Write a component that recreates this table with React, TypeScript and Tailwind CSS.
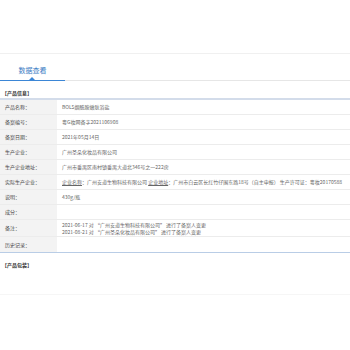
const rows: { label: string; value: React.ReactNode; tall?: boolean }[] = [
  { label: "产品名称：", value: "BOLS烟酰胺嫩肤浴盐" },
  { label: "备案编号：", value: "粤G妆网备字2021106908" },
  { label: "备案日期：", value: "2021年05月14日" },
  { label: "生产企业：", value: "广州圣朵化妆品有限公司" },
  { label: "生产企业地址：", value: "广州市番禺区南村镇番禺大道北346号之一222房" },
  {
    label: "实际生产企业：",
    value: (
      <span className="whitespace-nowrap">
        <span className="underline">企业名称</span>：广州安道生物科技有限公司{" "}
        <span className="underline">企业地址</span>：广州市白云区长红竹仔围东路18号（自主申报） 生产许可证：粤妆20170588
      </span>
    ),
  },
  { label: "说明：", value: "430g/瓶" },
  { label: "成分：", value: "" },
  {
    label: "备注：",
    tall: true,
    value: (
      <div className="leading-[7px]">
        <div>2021-06-17 对 “广州安道生物科技有限公司” 进行了备案人变更</div>
        <div>2021-08-21 对 “广州圣朵化妆品有限公司” 进行了备案人变更</div>
      </div>
    ),
  },
  { label: "历史记录：", value: "" },
]

export default function App() {
  return (
    <div
      className="w-[350px] h-[350px] bg-white overflow-hidden text-[#555]"
      style={{ fontFamily: '"Noto Sans CJK SC", "Liberation Sans", sans-serif' }}
    >
      <div className="h-[53px]" />
      <div className="border-t border-[#f0f0f0] h-[28px] border-b border-b-[#e6e6e6] relative">
        <div className="w-[65px] h-full flex items-end justify-center pb-[5px] text-[7px] text-[#3b7dc4] border-b border-[#3b86d6] relative top-px">
          数据查看
          <span className="absolute bottom-0 left-[29px] w-0 h-0 border-l-[3px] border-r-[3px] border-b-[3px] border-l-transparent border-r-transparent border-b-[#3b86d6]" />
        </div>
      </div>
      <div className="px-[2px] pt-[9px] text-[5px] font-bold text-[#333] leading-[6px]">【产品信息】</div>
      <div className="mt-[2px] border-t-2 border-[#d3dcea] border-b border-b-[#b9cde6]">
        {rows.map((r) => (
          <div
            key={r.label}
            className={`flex border-b border-[#ececec] last:border-b-0 text-[5px] ${r.tall ? "h-[17px]" : "h-[15px]"}`}
          >
            <div className="w-[57px] shrink-0 bg-[#f3f3f3] flex items-center pl-[5px] text-[#444]">
              {r.label}
            </div>
            <div className="flex-1 flex items-center pl-[5px] text-[#666] overflow-hidden">{r.value}</div>
          </div>
        ))}
      </div>
      <div className="px-[2px] pt-[9px] text-[5px] font-bold text-[#333] leading-[6px]">【产品包装】</div>
      <div className="mt-[26px] border-t border-[#f6f6f6]" />
    </div>
  )
}
